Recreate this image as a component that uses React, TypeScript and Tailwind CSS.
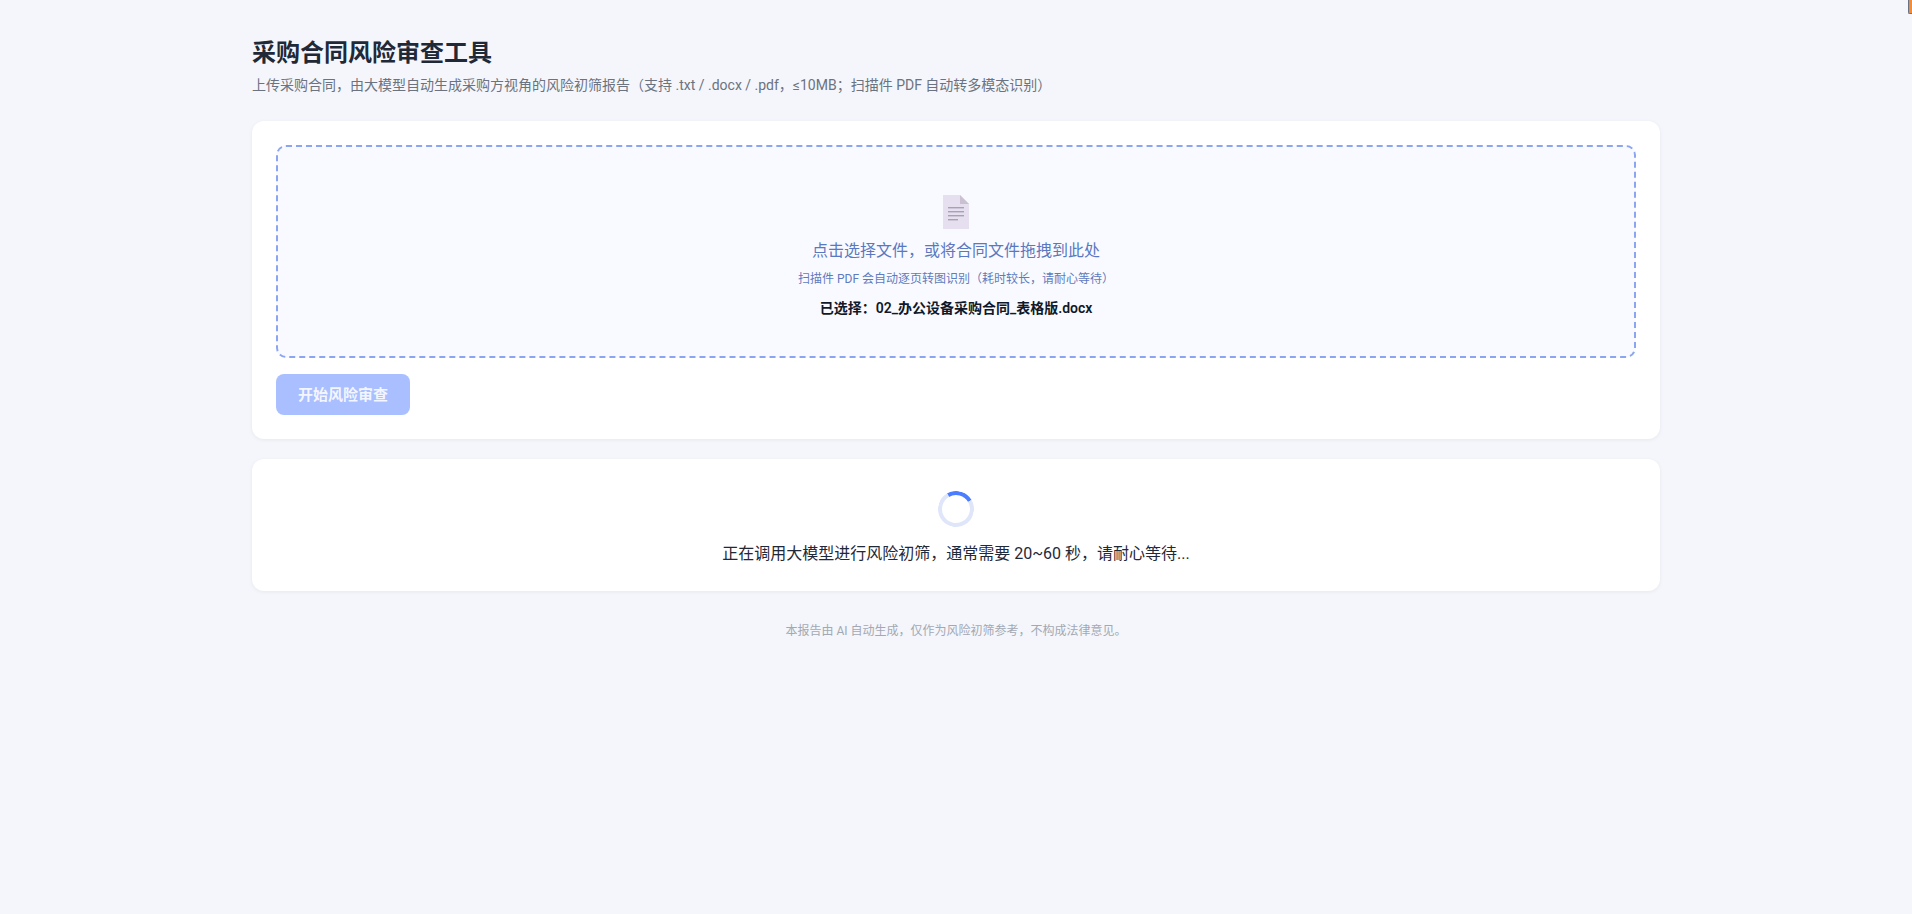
import React from "react";

const font = { fontFamily: 'Roboto, "Noto Sans CJK SC", sans-serif' };

function FileIcon() {
  return (
    <svg width="26" height="34" viewBox="0 0 26 34" className="block">
      <path d="M0 0H17L26 9V34H0Z" fill="#e6dff0" />
      <path d="M17 0L26 9H17Z" fill="#cac0d2" />
      <rect x="5" y="12" width="16" height="1.4" fill="#a9a0b3" />
      <rect x="5" y="16" width="16" height="1.4" fill="#a9a0b3" />
      <rect x="5" y="20" width="16" height="1.4" fill="#a9a0b3" />
      <rect x="5" y="24" width="10" height="1.4" fill="#a9a0b3" />
    </svg>
  );
}

export default function App() {
  return (
    <div className="relative min-h-[914px] bg-[#f4f6fb]" style={font}>
      <div className="absolute right-0 top-0 h-[14px] w-[4px] rounded-bl-[2px] border-b border-l border-[#6b7280] bg-[#f28c38]" />
      <div className="mx-auto w-[1408px] pt-[37px]">
        <h1 className="text-[24px] font-bold leading-[32px] text-[#1f2937]">采购合同风险审查工具</h1>
        <p className="mt-[5px] text-[14px] leading-[22px] text-[#6b7280]">
          上传采购合同，由大模型自动生成采购方视角的风险初筛报告（支持 .txt / .docx / .pdf，≤10MB；扫描件 PDF 自动转多模态识别）
        </p>

        <div className="mt-[25px] rounded-xl bg-white p-6 shadow-[0_1px_4px_rgba(0,0,0,0.06)]">
          <div className="flex h-[213px] flex-col items-center rounded-[10px] border-2 border-dashed border-[#8ba5f0] bg-[#f9faff] pt-[48px]">
            <FileIcon />
            <div className="mt-[9px] text-[16px] leading-[26px] text-[#5a78c0]">点击选择文件，或将合同文件拖拽到此处</div>
            <div className="mt-[6px] text-[12px] leading-[18px] text-[#5f7bbd]">扫描件 PDF 会自动逐页转图识别（耗时较长，请耐心等待）</div>
            <div className="mt-[10px] text-[14px] font-semibold leading-[20px] text-[#111827]">已选择：02_办公设备采购合同_表格版.docx</div>
          </div>
          <button className="mt-4 block h-[41px] w-[134px] rounded-lg bg-[#a9bfff] pt-[2px] text-[15px] font-semibold text-[#f3f6ff]">开始风险审查</button>
        </div>

        <div className="mt-5 flex h-[132px] flex-col items-center rounded-xl bg-white pt-[32px] shadow-[0_1px_4px_rgba(0,0,0,0.06)]">
          <div className="h-9 w-9 rotate-[15deg] rounded-full border-4 border-[#dfe6f9] border-t-[#4a7dff]" />
          <div className="mt-[15px] text-[16px] leading-[24px] text-[#1f2937]">正在调用大模型进行风险初筛，通常需要 20~60 秒，请耐心等待...</div>
        </div>

        <div className="mt-[31px] text-center text-[12px] leading-[18px] text-[#a3a8b3]">本报告由 AI 自动生成，仅作为风险初筛参考，不构成法律意见。</div>
      </div>
    </div>
  );
}
